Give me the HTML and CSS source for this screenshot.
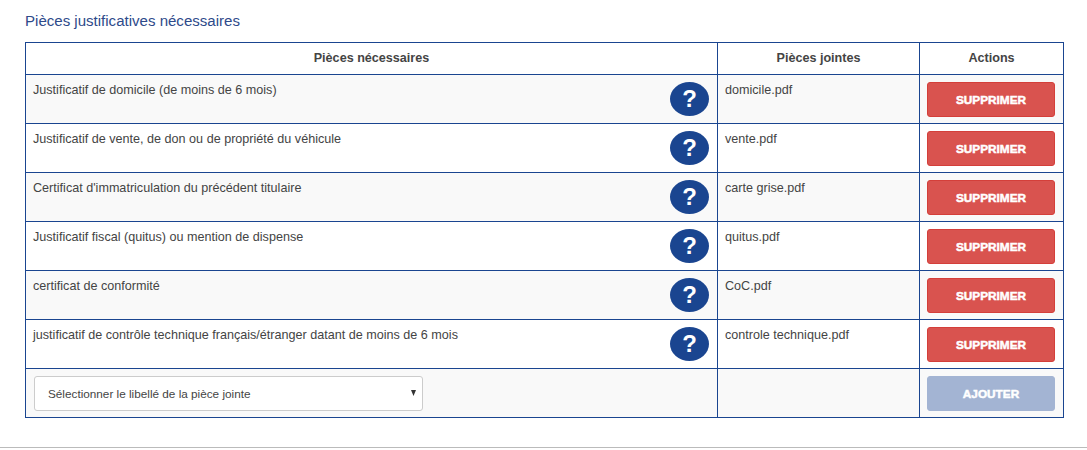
FILE: index.html
```html
<!DOCTYPE html>
<html lang="fr">
<head>
<meta charset="UTF-8" />
<meta name="viewport" content="width=device-width, initial-scale=1" />
<title>Pièces justificatives nécessaires</title>
<link rel="stylesheet" href="styles.css">
</head>
<body>

<div class="section">
  <h2 class="section-title">Pièces justificatives nécessaires</h2>

  <table class="pieces">
    <thead>
      <tr>
        <th class="col-piece">Pièces nécessaires</th>
        <th class="col-file">Pièces jointes</th>
        <th class="col-actions">Actions</th>
      </tr>
    </thead>
    <tbody>
      <tr>
        <td><div class="piece-cell"><span>Justificatif de domicile (de moins de 6 mois)</span><a class="help">?</a></div></td>
        <td>domicile.pdf</td>
        <td><button class="btn btn-delete">Supprimer</button></td>
      </tr>
      <tr>
        <td><div class="piece-cell"><span>Justificatif de vente, de don ou de propriété du véhicule</span><a class="help">?</a></div></td>
        <td>vente.pdf</td>
        <td><button class="btn btn-delete">Supprimer</button></td>
      </tr>
      <tr>
        <td><div class="piece-cell"><span>Certificat d'immatriculation du précédent titulaire</span><a class="help">?</a></div></td>
        <td>carte grise.pdf</td>
        <td><button class="btn btn-delete">Supprimer</button></td>
      </tr>
      <tr>
        <td><div class="piece-cell"><span>Justificatif fiscal (quitus) ou mention de dispense</span><a class="help">?</a></div></td>
        <td>quitus.pdf</td>
        <td><button class="btn btn-delete">Supprimer</button></td>
      </tr>
      <tr>
        <td><div class="piece-cell"><span>certificat de conformité</span><a class="help">?</a></div></td>
        <td>CoC.pdf</td>
        <td><button class="btn btn-delete">Supprimer</button></td>
      </tr>
      <tr>
        <td><div class="piece-cell"><span>justificatif de contrôle technique français/étranger datant de moins de 6 mois</span><a class="help">?</a></div></td>
        <td>controle technique.pdf</td>
        <td><button class="btn btn-delete">Supprimer</button></td>
      </tr>
      <tr>
        <td>
          <select class="piece-select">
            <option>Sélectionner le libellé de la pièce jointe</option>
          </select>
        </td>
        <td></td>
        <td><button class="btn btn-add" disabled>Ajouter</button></td>
      </tr>
    </tbody>
  </table>
</div>

<hr class="separator">

</body>
</html>
```

FILE: styles.css
```css
html, body {
  height: 100%;
}
body {
  margin: 0;
  font-family: "Liberation Sans", Arial, sans-serif;
  font-size: 12.6px;
  color: #444;
  background: #fff;
  overflow: hidden;
}
.section {
  padding: 12px 23px 0 25px;
}
.section-title {
  margin: 0 0 12px 0;
  font-size: 15.05px;
  line-height: 18px;
  font-weight: normal;
  color: #2e4a8a;
}
.pieces {
  width: 1039px;
  table-layout: fixed;
  border-collapse: collapse;
}
.pieces th, .pieces td {
  border: 1px solid #1a4590;
  padding: 7px 7px 6px;
  vertical-align: top;
  line-height: 15px;
}
.pieces td {
  line-height: 17px;
}
.pieces th {
  padding: 7px;
  height: 17px;
  font-weight: bold;
  text-align: center;
  vertical-align: middle;
}
.col-piece {
  width: 677px;
}
.col-file {
  width: 187px;
}
.col-actions {
  width: 129px;
}
.pieces tbody tr:nth-child(odd) td {
  background: #f9f9f9;
}
.piece-cell {
  display: flex;
  justify-content: space-between;
  align-items: flex-start;
}
.help {
  flex: none;
  width: 39px;
  height: 34px;
  margin-right: 1px;
  border-radius: 50%;
  background: #1a4590;
  color: #fff;
  font-size: 24px;
  font-weight: bold;
  line-height: 34px;
  text-align: center;
}
.btn {
  display: block;
  width: 128px;
  height: 35px;
  padding: 0;
  border-radius: 3px;
  font-family: "Liberation Sans", Arial, sans-serif;
  font-size: 11.8px;
  font-weight: bold;
  text-transform: uppercase;
  color: #fff;
  -webkit-text-stroke: 0.5px #fff;
}
.btn-delete {
  background: #d9534f;
  border: 1px solid #d43f3a;
}
.btn-add {
  background: #a3b4d3;
  border: 1px solid #a3b4d3;
}
.piece-select {
  display: block;
  width: 389px;
  height: 35px;
  margin-left: 1px;
  padding: 0 10px 0 13px;
  font-family: "Liberation Sans", Arial, sans-serif;
  font-size: 11.75px;
  color: #444;
  appearance: none;
  background: #fff url("data:image/svg+xml,%3Csvg xmlns='http://www.w3.org/2000/svg' width='5' height='6'%3E%3Cpath d='M0 0h5L2.5 6z' fill='%23333'/%3E%3C/svg%3E") no-repeat 376px 13px;
  border: 1px solid #ccc;
  border-radius: 3px;
}
.separator {
  margin: 29px 0 0 0;
  border: none;
  border-top: 1px solid #bbb;
}
```
